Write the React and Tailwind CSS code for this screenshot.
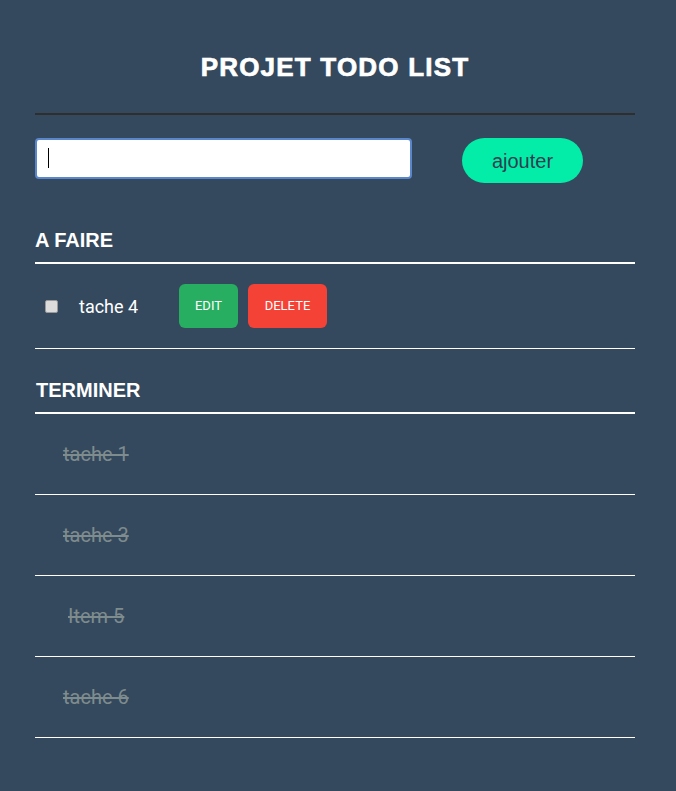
import React, { useState } from 'react';

const doneTasks = [
  { id: 1, label: 'tache 1' },
  { id: 3, label: 'tache 3' },
  { id: 5, label: 'Item 5', shift: true },
  { id: 6, label: 'tache 6' },
];

const App = () => {
  const [value, setValue] = useState('');

  return (
    <div className="min-h-screen bg-[#34495e] font-['Liberation_Sans',Arial,sans-serif]">
      <div className="w-[600px] ml-[35px] pt-[51px]">
        {/* Title */}
        <h1 className="text-center text-white font-bold text-[26px] leading-[32px] tracking-[1.2px] [-webkit-text-stroke:0.7px_white]">
          PROJET TODO LIST
        </h1>
        <div className="mt-[30px] border-t-2 border-[#2e2e2e]" />

        {/* Add form */}
        <div className="mt-[23px] flex items-start">
          <div className="relative">
            <input
              type="text"
              value={value}
              onChange={(e) => setValue(e.target.value)}
              className="w-[377px] h-[41px] bg-white rounded-[4px] border-2 border-[#5a86cc] px-3 text-[16px] text-black outline-none caret-transparent"
            />
            {value === '' && (
              <span className="absolute left-[13px] top-[10px] w-px h-[20px] bg-black pointer-events-none" />
            )}
          </div>
          <button className="ml-[50px] w-[121px] h-[45px] rounded-full bg-[#03eda9] text-[#2c3e50] text-[20px]">
            ajouter
          </button>
        </div>

        {/* Todo section */}
        <h2 className="mt-[45px] pb-[10px] border-b-2 border-white text-white font-bold text-[20px] leading-[24px]">
          A FAIRE
        </h2>
        <div className="h-[85px] flex items-center border-b border-white">
          <span className="ml-[10px] w-[13px] h-[13px] rounded-[2px] bg-[#dcdcdc] border border-[#9a9a9a]" />
          <span className="ml-[21px] w-[100px] text-white text-[18px] font-['Roboto',sans-serif]">tache 4</span>
          <button className="w-[59px] h-[44px] rounded-[6px] bg-[#27ae60] text-white text-[13px] font-['Roboto',sans-serif]">
            EDIT
          </button>
          <button className="ml-[10px] w-[79px] h-[44px] rounded-[6px] bg-[#f44336] text-white text-[13px] font-['Roboto',sans-serif]">
            DELETE
          </button>
        </div>

        {/* Done section */}
        <h2 className="mt-[29px] pl-[1px] pb-[10px] border-b-2 border-white text-white font-bold text-[20px] leading-[24px]">
          TERMINER
        </h2>
        {doneTasks.map((task) => (
          <div key={task.id} className="h-[81px] flex items-center border-b border-white">
            <span
              className={`${task.shift ? 'pl-[33px]' : 'pl-[28px]'} text-[20px] text-[#7f8c8d] line-through font-['Roboto',sans-serif]`}
            >
              {task.label}
            </span>
          </div>
        ))}
      </div>
    </div>
  );
};

export default App;
